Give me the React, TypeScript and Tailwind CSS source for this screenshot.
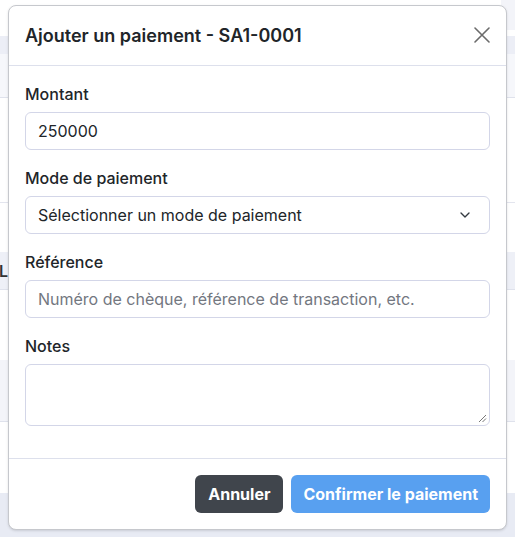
import { ChevronDown } from "lucide-react";

const Field = ({ label, children }: { label: string; children: React.ReactNode }) => {
  return (
    <div className="mb-4">
      <label className="mb-1.5 block text-[16px] leading-[24px] font-medium text-[#212529]">
        {label}
      </label>
      {children}
    </div>
  );
};

const inputBox =
  "flex h-[38px] w-full items-center rounded-md border border-[#d3d6e8] bg-white px-3 text-[16px]";

const App = () => {
  return (
    <div className="relative h-[537px] w-[515px] overflow-hidden bg-white font-['Inter',sans-serif]">
      {/* page behind the dialog */}
      <div className="flex h-full flex-col">
        <div className="flex h-[36px] justify-end">
          <div className="h-[30px] w-[14px] bg-[#f3f4f9]" />
        </div>
        <div className="h-[18px] bg-[#eceef6]" />
        <div className="h-[44px] border-b border-[#dfe2ec] bg-[#f6f7fb]" />
        <div className="h-[105px] border-b border-[#e3e5ee]" />
        <div className="h-[49px]" />
        <div className="flex h-[38px] items-center border-b border-[#dfe2ec] bg-[#eef0f7] text-[16px] font-semibold text-[#333]">
          <span className="-ml-px">L</span>
        </div>
        <div className="h-[70px]" />
        <div className="h-[62px] border-b border-[#dfe2ec] bg-[#f3f4f9]" />
        <div className="h-[71px]" />
        <div className="flex-1 bg-[#e8ebf4]" />
      </div>

      {/* dialog */}
      <div className="absolute top-[5px] left-2 flex w-[499px] flex-col rounded-lg border border-[#c6c8cd] bg-white shadow-sm">
        <div className="flex h-[60px] items-center justify-between border-b border-[#dde0ec] pr-[16px] pl-4">
          <h5 className="text-[18px] font-semibold text-[#212529]">Ajouter un paiement - SA1-0001</h5>
          <svg width="16" height="16" viewBox="0 0 16 16" className="mb-px">
            <path d="M1 1 L15 15 M15 1 L1 15" stroke="#6b6b6b" strokeWidth="1.6" strokeLinecap="round" />
          </svg>
        </div>

        <div className="px-4 pt-4 pb-4">
          <Field label="Montant">
            <div className={`${inputBox} text-[#212529]`}>250000</div>
          </Field>
          <Field label="Mode de paiement">
            <div className={`${inputBox} justify-between text-[#212529]`}>
              <span>Sélectionner un mode de paiement</span>
              <ChevronDown className="mr-1 h-4 w-4 text-[#343a40]" strokeWidth={2} />
            </div>
          </Field>
          <Field label="Référence">
            <div className={`${inputBox} text-[#73777f]`}>
              Numéro de chèque, référence de transaction, etc.
            </div>
          </Field>
          <Field label="Notes">
            <div className="relative h-[62px] w-full rounded-md border border-[#d3d6e8] bg-white">
              <svg className="absolute right-[2px] bottom-[2px]" width="9" height="9" viewBox="0 0 9 9">
                <path d="M8 1 L1 8 M8 4.5 L4.5 8" stroke="#777" strokeWidth="1" />
              </svg>
            </div>
          </Field>
        </div>

        <div className="flex justify-end gap-2 border-t border-[#dde0ec] px-4 py-4">
          <button className="h-[38px] rounded-md bg-[#40454c] px-[13px] text-[16px] font-bold text-white">
            Annuler
          </button>
          <button className="h-[38px] rounded-md bg-[#58a0f0] px-3 text-[16px] font-bold text-white">
            Confirmer le paiement
          </button>
        </div>
      </div>
    </div>
  );
};

export default App;
